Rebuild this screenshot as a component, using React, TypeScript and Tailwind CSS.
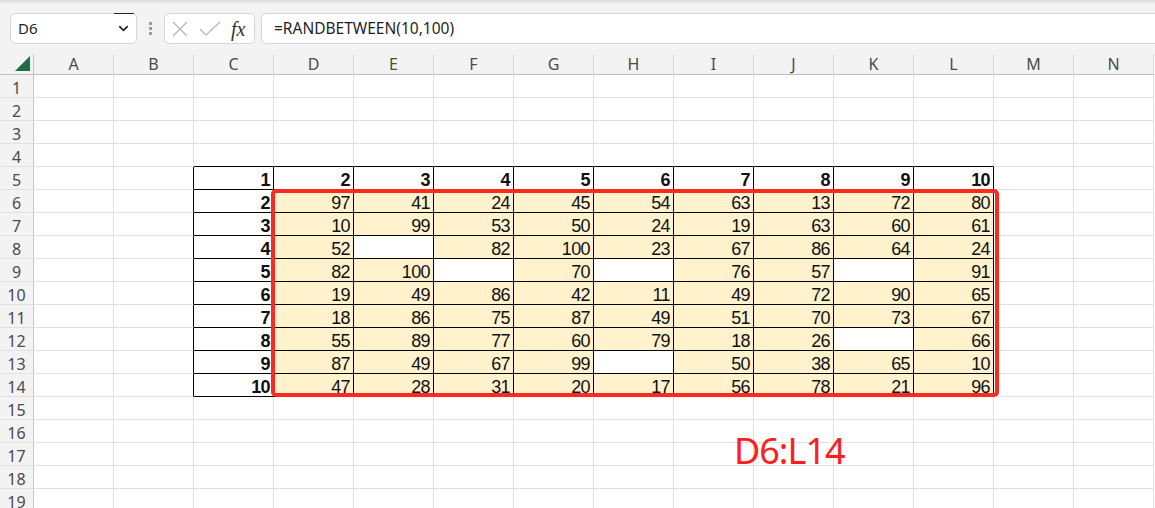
import { ChevronDown } from "lucide-react"

const cols = ["A", "B", "C", "D", "E", "F", "G", "H", "I", "J", "K", "L", "M", "N"]
const rows = Array.from({ length: 19 }, (_, i) => i + 1)

// D6:L14
const data: (number | null)[][] = [
  [97, 41, 24, 45, 54, 63, 13, 72, 80],
  [10, 99, 53, 50, 24, 19, 63, 60, 61],
  [52, null, 82, 100, 23, 67, 86, 64, 24],
  [82, 100, null, 70, null, 76, 57, null, 91],
  [19, 49, 86, 42, 11, 49, 72, 90, 65],
  [18, 86, 75, 87, 49, 51, 70, 73, 67],
  [55, 89, 77, 60, 79, 18, 26, null, 66],
  [87, 49, 67, 99, null, 50, 38, 65, 10],
  [47, 28, 31, 20, 17, 56, 78, 21, 96],
]

const inTable = (r: number, c: number) => r >= 5 && r <= 14 && c >= 2 && c <= 11

function getCell(r: number, c: number) {
  if (!inTable(r, c)) return null
  if (c === 2) return { text: String(r - 4), bold: true, fill: false }
  if (r === 5) return { text: String(c - 1), bold: true, fill: false }
  const v = data[r - 6][c - 3]
  return { text: v === null ? "" : String(v), bold: false, fill: v !== null }
}

function Toolbar() {
  return (
    <div className="relative h-[54px] bg-[#f3f3f3]">
      <div className="h-[5px] bg-gradient-to-b from-[#dedede] to-[#f3f3f3]" />
      <div className="flex items-start pl-[10px] pt-[8px]">
        {/* name box */}
        <div className="relative flex h-[31px] w-[127px] items-center justify-between rounded-[5px] border border-[#d6d6d6] bg-white pl-[7px] pr-[5px]">
          <span className="text-[15px] text-[#1f1f1f] [font-family:'Noto_Sans',sans-serif]">D6</span>
          <ChevronDown size={15} strokeWidth={2.6} className="text-[#222]" />
          <div className="absolute -top-px right-[2px] h-px w-[20px] bg-[#222]" />
        </div>
        {/* drag dots */}
        <div className="flex w-[27px] flex-col items-center gap-[2px] pt-[9px]">
          <div className="h-[3px] w-[3px] bg-[#9a9a9a]" />
          <div className="h-[3px] w-[3px] bg-[#9a9a9a]" />
          <div className="h-[3px] w-[3px] bg-[#9a9a9a]" />
        </div>
        {/* cancel / enter / fx */}
        <div className="flex h-[31px] w-[91px] items-center rounded-[5px] border border-[#d6d6d6] bg-white pl-[6px]">
          <svg width="18" height="18" viewBox="0 0 18 18" className="text-[#b4b4b4]">
            <path d="M2 2 L16 16 M16 2 L2 16" stroke="currentColor" strokeWidth="1.2" fill="none" />
          </svg>
          <svg width="22" height="18" viewBox="0 0 22 18" className="ml-[10px] text-[#b4b4b4]">
            <path d="M1 9 L7 15 L21 2" stroke="currentColor" strokeWidth="1.2" fill="none" />
          </svg>
          <span className="ml-[10px] text-[20px] italic leading-none text-[#333] [font-family:'Liberation_Serif',serif]">
            fx
          </span>
        </div>
        {/* formula box */}
        <div className="ml-[6px] flex h-[31px] flex-1 items-center rounded-l-[5px] border border-r-0 border-[#d6d6d6] bg-white pl-[12px]">
          <span className="text-[15.5px] text-[#1f1f1f] [font-family:'Noto_Sans',sans-serif]">=RANDBETWEEN(10,100)</span>
        </div>
      </div>
    </div>
  )
}

export default function App() {
  return (
    <div className="relative h-[508px] w-[1155px] overflow-hidden bg-white">
      <Toolbar />

      <div className="grid grid-cols-[34px_repeat(14,80px)]">
        {/* corner */}
        <div className="flex h-[21px] items-end justify-end border-r border-b border-r-[#c8c8c8] border-b-[#bdbdbd] bg-[#f3f3f3] pb-[3px] pr-[3px]">
          <svg width="15" height="15" viewBox="0 0 15 15">
            <path d="M15 0 L15 15 L0 15 Z" fill="#1f6e43" />
          </svg>
        </div>
        {cols.map((c) => (
          <div
            key={c}
            className="flex h-[21px] items-center justify-center border-r border-b border-r-[#dadada] border-b-[#bdbdbd] bg-[#f3f3f3] text-[16px] text-[#4a4a4a] [font-family:'Noto_Sans',sans-serif]"
          >
            {c}
          </div>
        ))}

        {rows.map((r) => (
          <Row key={r} r={r} />
        ))}
      </div>

      {/* selection outline D6:L14 */}
      <div className="absolute left-[271px] top-[189px] h-[208px] w-[728px] rounded-[5px] border-[4px] border-[#fc2a1f]" />

      <div className="absolute left-[734px] top-[433px] text-[36px] leading-none tracking-[-1px] text-[#ff1d1d] [font-family:'Noto_Sans',sans-serif]">
        D6:L14
      </div>
    </div>
  )
}

function Row({ r }: { r: number }) {
  return (
    <>
      <div className="flex h-[23px] items-end justify-center border-r border-b border-r-[#c8c8c8] border-b-[#e1e1e1] bg-[#f3f3f3] pb-[1px] text-[16px] leading-none text-[#4a4a4a] [font-family:'Noto_Sans',sans-serif]">
        {r}
      </div>
      {cols.map((_, c) => {
        const cell = getCell(r, c)
        const blackR = inTable(r, c) || inTable(r, c + 1)
        const blackB = inTable(r, c) || inTable(r + 1, c)
        return (
          <div
            key={c}
            className={[
              "flex h-[23px] items-end justify-end border-r border-b pr-[3px] text-[18px] leading-none tracking-[-0.6px] text-[#111] [font-family:'Liberation_Sans',sans-serif]",
              blackR ? "border-r-black" : "border-r-[#e1e1e1]",
              blackB ? "border-b-black" : "border-b-[#e1e1e1]",
              cell?.fill ? "bg-[#fff2cc]" : "",
              cell?.bold ? "font-bold" : "",
            ].join(" ")}
          >
            {cell?.text}
          </div>
        )
      })}
    </>
  )
}
